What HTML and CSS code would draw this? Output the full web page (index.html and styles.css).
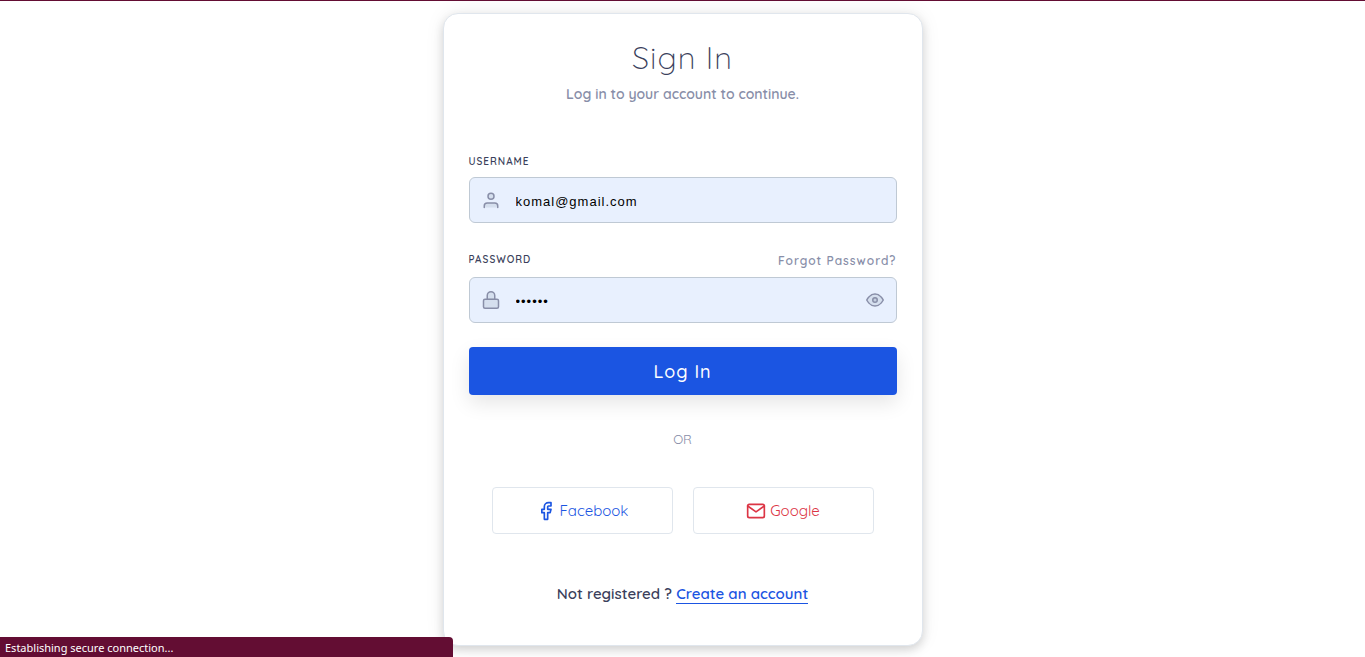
FILE: index.html
```html
<!DOCTYPE html>
<html lang="en">
<head>
<meta charset="utf-8">
<meta name="viewport" content="width=device-width, initial-scale=1">
<title>Sign In</title>
<link rel="stylesheet" href="styles.css">
</head>
<body>
<main class="form-container">
  <div class="form-content">
    <h1 class="title">Sign In</h1>
    <p class="subtitle">Log in to your account to continue.</p>

    <form class="login-form">
      <label class="label" for="username">USERNAME</label>
      <div class="field">
        <svg class="icon" viewBox="0 0 24 24"><path d="M21 22v-2a4 4 0 0 0-4-4H7a4 4 0 0 0-4 4v2"/><circle cx="12" cy="7" r="4"/></svg>
        <input class="input" id="username" type="text" value="komal@gmail.com">
      </div>

      <div class="label-row">
        <label class="label" for="password">PASSWORD</label>
        <a class="forgot" href="#">Forgot Password?</a>
      </div>
      <div class="field">
        <svg class="icon" viewBox="0 0 24 24"><rect x="2" y="11" width="20" height="12" rx="2"/><path d="M7 11V6a5 5 0 0 1 10 0v5"/></svg>
        <input class="input" id="password" type="password" value="secret">
        <button class="toggle" type="button" aria-label="Show password">
          <svg class="icon-eye" viewBox="0 0 24 24"><path d="M1 12s4-8 11-8 11 8 11 8-4 8-11 8-11-8-11-8z"/><circle cx="12" cy="12" r="3"/></svg>
        </button>
      </div>

      <button class="btn-login" type="submit">Log In</button>
    </form>

    <p class="division">OR</p>

    <div class="social">
      <a class="btn-social facebook" href="#">
        <svg class="icon-social" viewBox="0 0 24 24"><path d="M18 2h-3a5 5 0 0 0-5 5v3H7v4h3v8h4v-8h3l1-4h-4V7a1 1 0 0 1 1-1h3z"/></svg>
        <span>Facebook</span>
      </a>
      <a class="btn-social google" href="#">
        <svg class="icon-social" viewBox="0 0 24 24"><path d="M4 4h16c1.100 0 2 .9 2 2v12c0 1.100-.9 2-2 2H4c-1.100 0-2-.9-2-2V6c0-1.100.9-2 2-2z"/><path d="M22 6l-10 7L2 6"/></svg>
        <span>Google</span>
      </a>
    </div>

    <p class="signup">Not registered ? <a class="signup-link" href="#">Create an account</a></p>
  </div>
</main>
<div class="status">Establishing secure connection...</div>
</body>
</html>
```
FILE: styles.css
```css
* {
  box-sizing: border-box;
}

body {
  margin: 0;
  border-top: 1px solid #630d33;
  background: #fff;
  color: #3b3f5c;
  font-family: Quicksand, Lato, "Liberation Sans", sans-serif;
}

h1, p {
  margin: 0;
}

/* card */
.form-container {
  padding: 12px 16px;
}

.form-content {
  max-width: 480px;
  margin: 0 auto;
  padding: 22px 25px 40px;
  border: 1px solid #e0e6ed;
  border-radius: 15px;
  background: #fff;
  box-shadow: 0 4px 10px rgba(0, 0, 0, 0.14), 0 0 20px rgba(0, 0, 0, 0.07);
  text-align: center;
}

.title {
  font-size: 31px;
  font-weight: 300;
  line-height: 44px;
  letter-spacing: 1px;
}

.subtitle {
  margin-top: 2px;
  color: #888ea8;
  font-size: 14px;
  font-weight: 600;
  line-height: 24px;
}

/* form */
.login-form {
  margin-top: 46px;
  text-align: left;
}

.label {
  display: block;
  font-size: 10px;
  font-weight: 600;
  line-height: 20px;
  letter-spacing: 1px;
}

.label-row {
  display: flex;
  justify-content: space-between;
  margin-top: 27px;
}

.forgot {
  color: #888ea8;
  font-size: 12px;
  font-weight: 600;
  line-height: 22px;
  letter-spacing: 1px;
  text-decoration: none;
}

.field {
  display: flex;
  align-items: center;
  height: 46px;
  margin-top: 5px;
  padding: 0 12px;
  border: 1px solid #bfc9d4;
  border-radius: 6px;
  background: #e8f0fe;
}

.icon {
  flex: none;
  width: 18px;
  height: 20px;
}

.icon,
.icon-eye {
  display: block;
  fill: rgba(0, 23, 55, 0.08);
  stroke: #888ea8;
  stroke-width: 2;
  stroke-linecap: round;
  stroke-linejoin: round;
}

.icon-eye {
  width: 18px;
  height: 18px;
}

.input {
  flex: 1;
  min-width: 0;
  height: 44px;
  padding: 2px 0 0 16px;
  border: 0;
  outline: 0;
  background: none;
  color: #000;
  font-family: "Liberation Sans", Arial, sans-serif;
  font-size: 13px;
  letter-spacing: 1px;
}

.toggle {
  padding: 0;
  border: 0;
  background: none;
  cursor: pointer;
}

.btn-login {
  display: block;
  width: 100%;
  height: 48px;
  margin-top: 24px;
  border: 0;
  border-radius: 4px;
  background: #1b55e2;
  box-shadow: 0 8px 20px rgba(0, 0, 0, 0.1);
  color: #fff;
  font-family: inherit;
  font-size: 18px;
  font-weight: 500;
  letter-spacing: 1px;
  cursor: pointer;
}

.division {
  margin-top: 34px;
  color: #888ea8;
  font-size: 13px;
  font-weight: 400;
  line-height: 20px;
}

/* social buttons */
.social {
  display: flex;
  gap: 20px;
  margin-top: 38px;
  padding: 0 23px;
}

.btn-social {
  display: flex;
  flex: 1;
  align-items: center;
  justify-content: center;
  gap: 4px;
  height: 47px;
  border: 1px solid #e0e6ed;
  border-radius: 4px;
  font-size: 15px;
  font-weight: 400;
  text-decoration: none;
}

.icon-social {
  width: 20px;
  height: 20px;
  fill: none;
  stroke: currentColor;
  stroke-width: 2;
  stroke-linecap: round;
  stroke-linejoin: round;
}

.facebook {
  color: #1b55e2;
}

.google {
  color: #dc3545;
}

.signup {
  margin-top: 49px;
  font-size: 15px;
  font-weight: 600;
  line-height: 22px;
}

.signup-link {
  border-bottom: 1px solid #1b55e2;
  color: #1b55e2;
  text-decoration: none;
}

/* browser status bubble, lies over the page */
.status {
  position: fixed;
  bottom: 0;
  left: 0;
  width: 453px;
  max-width: 100%;
  height: 20px;
  padding-left: 5px;
  border-top-right-radius: 4px;
  background: #630d33;
  color: #fff;
  font: 11px/21px "Noto Sans", "Open Sans", sans-serif;
}
```
